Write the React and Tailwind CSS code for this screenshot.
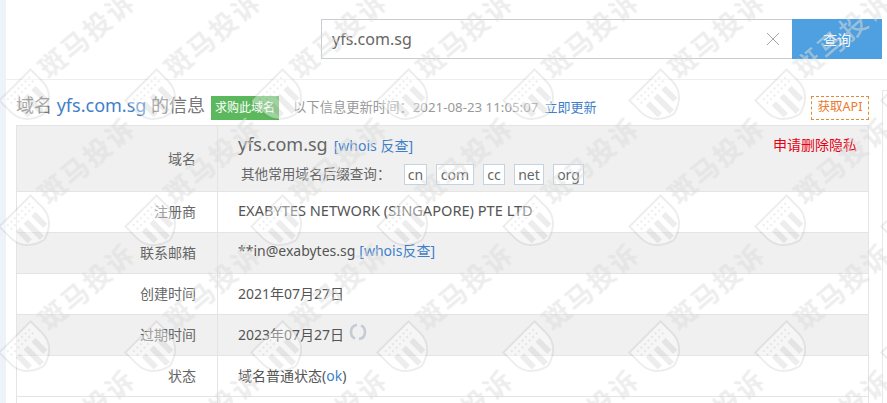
import React from "react";

const font = { cn: "font-['Noto_Sans','Noto_Sans_CJK_SC',sans-serif]" };

const suffixes = [
  { name: "cn", width: "w-[23px]" },
  { name: "com", width: "w-[38px]" },
  { name: "cc", width: "w-[22px]" },
  { name: "net", width: "w-[30px]" },
  { name: "org", width: "w-[31px]" },
];

const Shield = () => (
  <svg width="50" height="50" viewBox="0 0 50 50" className="absolute left-0 top-0 -rotate-45">
    <path
      d="M3 8 H47 V24 C47 38 37 46 25 49 C13 46 3 38 3 24 Z"
      fill="#fff"
      fillOpacity="0.4"
      stroke="#000"
      strokeOpacity="0.07"
      strokeWidth="2"
    />
    <g fill="#000" fillOpacity="0.07">
      <rect x="11" y="23" width="6" height="17" />
      <rect x="22" y="23" width="6" height="23" />
      <rect x="33" y="23" width="6" height="17" />
    </g>
    <g fill="#000" fillOpacity="0.07">
      {[0, 1, 2, 3, 4, 5, 6].map((i) => (
        <React.Fragment key={i}>
          <rect x={9 + i * 5} y="12" width="2" height="2" />
          <rect x={9 + i * 5} y="17" width="2" height="2" />
        </React.Fragment>
      ))}
    </g>
  </svg>
);

const WatermarkTile = () => (
  <div className="relative w-[126px] h-[126px] shrink-0">
    <Shield />
    <span className="absolute left-[40px] top-[-14px] origin-left -rotate-[40deg] text-[27px] font-medium leading-none tracking-[2px] whitespace-nowrap text-white/45 [text-shadow:0_0_1px_rgba(0,0,0,0.13)]">
      斑马投诉
    </span>
  </div>
);

const Watermark = () => (
  <div className="absolute left-[2px] top-[72px] w-[1008px] grid grid-cols-[repeat(8,126px)] pointer-events-none">
    {Array.from({ length: 32 }).map((_, i) => (
      <WatermarkTile key={i} />
    ))}
  </div>
);

const Row = ({ label, gray, children, className = "h-[41px]" }) => (
  <div className={`flex border-b border-[#e4e4e4] ${gray ? "bg-[#f0f0f0]" : "bg-white"} ${className}`}>
    <div className="w-[201px] shrink-0 flex items-center justify-end pr-[21px] pb-[1px] border-r border-[#e4e4e4] text-[14px] text-[#666]">
      {label}
    </div>
    <div className="flex-1 pl-[20px] pb-[2px] flex items-center text-[#555] text-[14px]">{children}</div>
  </div>
);

const RefreshIcon = () => (
  <svg width="18" height="20" viewBox="0 0 18 20" className="ml-[5px] mb-[4px]" fill="none" stroke="#c3ccd4" strokeWidth="2.6">
    <path d="M8 3 C4 3.5 2 6.5 2 10 C2 13 3.5 15.5 6 16.5" />
    <path d="M10 17 C14 16.5 16 13.5 16 10 C16 7 14.5 4.5 12 3.5" />
  </svg>
);

export default function App() {
  return (
    <div className={`relative w-[887px] h-[403px] overflow-hidden bg-white flex ${font.cn}`}>
      <div className="w-[6px] shrink-0 bg-[#eef3f9]" />

      <div className="flex-1 flex flex-col min-w-0">
        {/* Search bar */}
        <div className="h-[80px] shrink-0 border-b border-[#eeeeee] pt-[19px] pl-[315px] flex items-start">
          <div className="w-[471px] h-[40px] border border-r-0 border-[#c9cdd2] flex items-center pl-[10px] pr-[12px]">
            <span className="flex-1 text-[16px] text-[#666]">yfs.com.sg</span>
            <svg width="14" height="14" viewBox="0 0 14 14" stroke="#a8a8a8" strokeWidth="1">
              <path d="M1 1 L13 13 M13 1 L1 13" />
            </svg>
          </div>
          <button className="w-[90px] h-[40px] bg-[#4fa0e0] text-white text-[14px]">查询</button>
        </div>

        <div className="flex flex-1 min-h-0">
          <div className="flex-1 min-w-0 pl-[10px] pr-[13px]">
            {/* Title line */}
            <div className="h-[45px] pt-[10px] flex items-center">
              <h1 className="mb-[4px] text-[18px] text-[#777]">
                域名 <span className="text-[#4180c8]">yfs.com.sg</span> 的信息
              </h1>
              <span className="ml-[6px] w-[68px] h-[24px] bg-[#5cb85c] text-white text-[12px] flex items-center justify-center">
                求购此域名
              </span>
              <span className="ml-[14px] text-[13.3px] text-[#999]">以下信息更新时间：2021-08-23 11:05:07</span>
              <a className="ml-[6px] text-[13px] text-[#4180c8]">立即更新</a>
              <a className="ml-auto w-[58px] h-[24px] border border-dashed border-[#e08a3c] text-[#ea7a2c] text-[12.5px] flex items-center justify-center">
                获取API
              </a>
            </div>

            {/* Info table */}
            <div className="border-l border-r border-t border-[#e4e4e4]">
              <Row label="域名" gray className="h-[66px]">
                <div className="flex-1 flex flex-col">
                  <div className="flex items-center justify-between pr-[11px]">
                    <div className="flex items-baseline">
                      <span className="text-[18px] text-[#666]">yfs.com.sg</span>
                      <a className="ml-[6px] text-[14px] text-[#4180c8]">[whois 反查]</a>
                    </div>
                    <a className="text-[14px] text-[#e60012]">申请删除隐私</a>
                  </div>
                  <div className="mt-[6px] pl-[3px] flex items-center text-[13.6px] text-[#666]">
                    <span className="w-[163px]">其他常用域名后缀查询：</span>
                    <div className="flex gap-[9px]">
                      {suffixes.map((s) => (
                        <span
                          key={s.name}
                          className={`h-[21px] ${s.width} bg-white border border-[#c5d3de] text-[14px] text-[#666] flex items-center justify-center`}
                        >
                          {s.name}
                        </span>
                      ))}
                    </div>
                  </div>
                </div>
              </Row>
              <Row label="注册商">
                <span className="text-[14.6px]">EXABYTES NETWORK (SINGAPORE) PTE LTD</span>
              </Row>
              <Row label="联系邮箱" gray>
                <span className="mb-[3px]">**in@exabytes.sg</span>
                <a className="ml-[4px] mb-[3px] text-[#4180c8]">[whois反查]</a>
              </Row>
              <Row label="创建时间">2021年07月27日</Row>
              <Row label="过期时间" gray>
                2023年07月27日
                <RefreshIcon />
              </Row>
              <Row label="状态">
                域名普通状态(<a className="text-[#4180c8]">ok</a>)
              </Row>
              <Row label="" />
            </div>
          </div>
          <div className="w-[5px] shrink-0 mt-[10px] border-l border-t border-[#e8e8e8]" />
        </div>
      </div>

      <Watermark />
    </div>
  );
}
